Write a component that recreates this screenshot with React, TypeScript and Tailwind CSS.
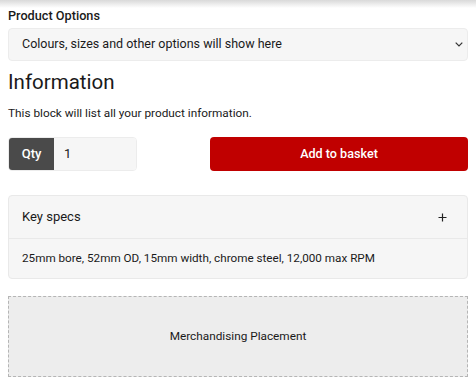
import React from "react";

export default function App() {
  return (
    <div className="w-[476px] h-[385px] bg-white overflow-hidden text-[#1a1a1a]" style={{ fontFamily: "Roboto, 'Noto Sans', sans-serif" }}>
      <div className="h-[8px] bg-gradient-to-b from-[#d9d9d9] to-white" />
      <div className="px-2">
        <div className="text-[12.7px] leading-[16px] font-medium">Product Options</div>
        <div className="mt-[4px] h-[33px] rounded-[4px] bg-[#f6f6f6] border border-[#ececec] flex items-center justify-between pl-[13px] pr-[4px]">
          <span className="text-[12.5px]">Colours, sizes and other options will show here</span>
          <svg width="8" height="5" viewBox="0 0 8 5" fill="none"><path d="M0.7 0.7 L4 4 L7.3 0.7" stroke="#333" strokeWidth="1.2" /></svg>
        </div>
        <h2 className="mt-[9px] text-[20.5px] leading-[24px] font-normal">Information</h2>
        <p className="mt-[11px] text-[11.8px] leading-[16px]">This block will list all your product information.</p>
        <div className="mt-[16px] flex items-center justify-between">
          <div className="flex h-[34px] w-[129px] rounded-[4px] overflow-hidden border border-[#ececec]">
            <div className="w-[45px] bg-[#4a4a4a] text-white text-[13px] font-medium flex items-center justify-center">Qty</div>
            <div className="flex-1 bg-[#f6f6f6] flex items-center pl-[10px] text-[13px]">1</div>
          </div>
          <button className="w-[258px] h-[34px] rounded-[4px] bg-[#c00000] text-white text-[12.6px] font-medium">Add to basket</button>
        </div>
        <div className="mt-[24px] rounded-[4px] border border-[#e9e9e9] bg-[#f6f6f6]">
          <div className="h-[43px] flex items-center justify-between pl-[13px] pr-[20px] border-b border-[#e9e9e9]">
            <span className="text-[13px]">Key specs</span>
            <svg width="9" height="9" viewBox="0 0 9 9"><path d="M4.5 0.5 V8.5 M0.5 4.5 H8.5" stroke="#222" strokeWidth="1.2" /></svg>
          </div>
          <div className="h-[39px] flex items-center pl-[13px] text-[11.7px]">25mm bore, 52mm OD, 15mm width, chrome steel, 12,000 max RPM</div>
        </div>
        <div className="mt-[17px] h-[81px] bg-[#ededed] border border-dashed border-[#b5b5b5] flex items-center justify-center text-[11.8px]">Merchandising Placement</div>
      </div>
    </div>
  );
}
